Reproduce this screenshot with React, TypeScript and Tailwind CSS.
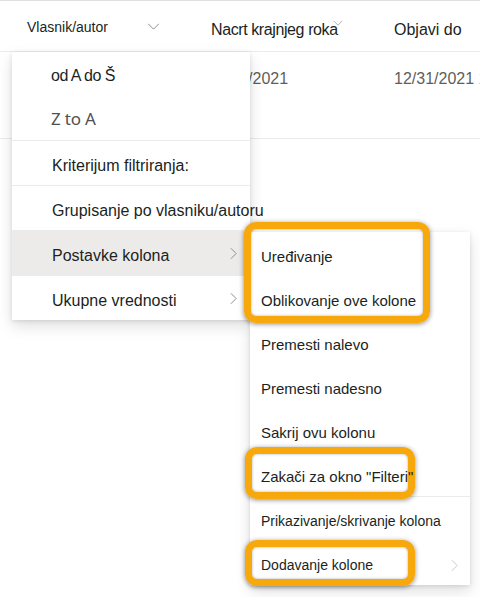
import React from 'react';

const leftItems = [
  { label: 'Kriterijum filtriranja:' },
  { label: 'Grupisanje po vlasniku/autoru' },
  { label: 'Postavke kolona', active: true, chevron: true },
  { label: 'Ukupne vrednosti', chevron: true },
];

const subItems = [
  'Uređivanje',
  'Oblikovanje ove kolone',
  'Premesti nalevo',
  'Premesti nadesno',
  'Sakrij ovu kolonu',
  'Zakači za okno "Filteri"',
];

function Chevron({ className }: { className?: string }) {
  return (
    <svg viewBox="0 0 8 14" className={className} fill="none" stroke="currentColor" strokeWidth="1.1">
      <path d="M1 1l6 6-6 6" />
    </svg>
  );
}

function ChevronDown({ className }: { className?: string }) {
  return (
    <svg viewBox="0 0 14 8" className={className} fill="none" stroke="currentColor" strokeWidth="1.1">
      <path d="M1 1l6 6 6-6" />
    </svg>
  );
}

export default function App() {
  return (
    <div className="relative w-[480px] h-[597px] overflow-hidden bg-white font-['Liberation_Sans',Arial,sans-serif] text-[#201f1e]">
      {/* list header */}
      <div className="border-t border-[#e1dfdd]">
        <div className="flex h-[51px] items-center border-b border-[#edebe9]">
          <div className="flex w-[211px] shrink-0 items-center pl-[27px] pt-[3px]">
            <span className="w-[120px] text-[14px] text-[#201f1e]">Vlasnik/autor</span>
            <ChevronDown className="-mt-[3px] w-[13px] h-[7px] text-[#8a8886]" />
          </div>
          <div className="relative mt-[7px] w-[183px] shrink-0 whitespace-nowrap text-[16px] tracking-[-0.4px]">
            Nacrt krajnjeg roka
            <ChevronDown className="absolute left-[122px] top-[2px] w-[10px] h-[6px] text-[#a19f9d]" />
          </div>
          <div className="mt-[7px] whitespace-nowrap text-[16px]">Objavi do</div>
        </div>
        <div className="flex h-[87px] border-b border-[#edebe9] text-[16px] text-[#605e5c]">
          <div className="w-[208px] shrink-0" />
          <div className="w-[186px] shrink-0 pt-[15px]">12/31/2021</div>
          <div className="whitespace-nowrap pt-[15px]">12/31/2021 11:59 PM</div>
        </div>
      </div>

      {/* column menu */}
      <div className="absolute left-[12px] top-[52px] w-[238px] bg-white shadow-[0_6px_14px_rgba(0,0,0,0.13),0_1px_4px_rgba(0,0,0,0.11)]">
        <div className="flex h-[44px] items-center pl-[39px] pt-[4px] text-[16px] tracking-[-0.5px]">od A do Š</div>
        <div className="flex h-[44px] items-center pl-[39px] pt-[2px] font-['Noto_Sans',sans-serif] text-[17px] tracking-[-0.2px] text-[#505050]">Z to A</div>
        {leftItems.map((item) => (
          <div key={item.label}>
            <div className="h-px bg-[#edebe9]" />
            <div
              className={
                'flex h-[44px] items-center justify-between whitespace-nowrap pl-[40px] pr-[13px] text-[16px] ' +
                (item.active ? 'bg-[#edebe9]' : '')
              }
            >
              <span className="pt-[5px]">{item.label}</span>
              {item.chevron && <Chevron className="mt-[1px] w-[7px] h-[13px] text-[#8a8886]" />}
            </div>
          </div>
        ))}
      </div>

      {/* column settings submenu */}
      <div className="absolute left-[250px] top-[232px] w-[220px] bg-white shadow-[0_6px_14px_rgba(0,0,0,0.13),0_1px_4px_rgba(0,0,0,0.11)]">
        {subItems.map((label) => (
          <div key={label} className="flex h-[44px] items-center whitespace-nowrap pl-[11px] pt-[6px] text-[15px]">
            <span className={label.startsWith('Zakači') ? 'relative z-30' : ''}>{label}</span>
          </div>
        ))}
        <div className="h-px bg-[#edebe9]" />
        <div className="flex h-[44px] items-center whitespace-nowrap pl-[11px] pt-[4px] text-[14px]">
          Prikazivanje/skrivanje kolona
        </div>
        <div className="flex h-[44px] items-center justify-between whitespace-nowrap pl-[11px] pr-[12px] pt-[4px] text-[14px]">
          <span>Dodavanje kolone</span>
          <Chevron className="w-[7px] h-[13px] text-[#c8c6c4]" />
        </div>
      </div>

      {/* callout highlights */}
      <div className="absolute left-[244px] top-[222px] z-20 h-[101px] w-[186px] rounded-[12px] border-[7px] border-[#f7a80c] shadow-[0_1px_5px_rgba(0,0,0,0.45),inset_0_0_3px_rgba(0,0,0,0.3)]" />
      <div className="absolute left-[245px] top-[447px] z-20 h-[52px] w-[170px] rounded-[12px] border-[7px] border-[#f7a80c] shadow-[0_1px_5px_rgba(0,0,0,0.45),inset_0_0_3px_rgba(0,0,0,0.3)]" />
      <div className="absolute left-[245px] top-[540px] z-20 h-[46px] w-[170px] rounded-[12px] border-[7px] border-[#f7a80c] shadow-[0_1px_5px_rgba(0,0,0,0.45),inset_0_0_3px_rgba(0,0,0,0.3)]" />
    </div>
  );
}
